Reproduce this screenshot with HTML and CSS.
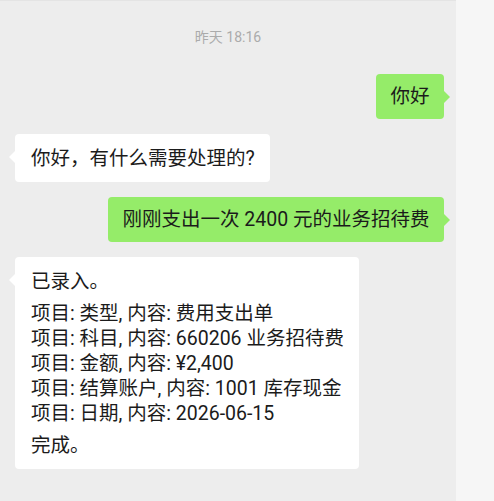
FILE: index.html
```html
<!DOCTYPE html>
<html lang="zh-CN">
<head>
<meta charset="utf-8">
<title>聊天</title>
<link rel="stylesheet" href="styles.css">
</head>
<body>
<div class="window">
  <main class="chat">
    <div class="time">昨天 18:16</div>
    <div class="row row-right">
      <div class="bubble bubble-me">你好</div>
    </div>
    <div class="row row-left">
      <div class="bubble bubble-other">你好，有什么需要处理的?</div>
    </div>
    <div class="row row-right">
      <div class="bubble bubble-me">刚刚支出一次 2400 元的业务招待费</div>
    </div>
    <div class="row row-left">
      <div class="bubble bubble-other">
        <p class="para">已录入。</p>
        <p class="para">项目: 类型, 内容: 费用支出单<br>项目: 科目, 内容: 660206 业务招待费<br>项目: 金额, 内容: ¥2,400<br>项目: 结算账户, 内容: 1001 库存现金<br>项目: 日期, 内容: 2026-06-15</p>
        <p class="para">完成。</p>
      </div>
    </div>
  </main>
  <aside class="side"></aside>
</div>
</body>
</html>
```

FILE: styles.css
```css
html, body {
  margin: 0;
  padding: 0;
}
body {
  width: 494px;
  height: 501px;
  overflow: hidden;
  font-family: Roboto, "Noto Sans CJK SC", sans-serif;
  color: #1b1b1b;
}
.window {
  display: flex;
  height: 501px;
}
.chat {
  width: 456px;
  flex: none;
  background: #ededed;
  border-top: 1px solid #e4e4e4;
  box-sizing: border-box;
  padding: 26px 12px 0 15px;
  display: flex;
  flex-direction: column;
  gap: 15px;
}
.side {
  flex: 1;
  background: #f6f6f6;
}
.time {
  text-align: center;
  font-size: 14px;
  line-height: 20px;
  color: #ababab;
  margin-right: -12px;
  margin-left: -15px;
  margin-bottom: 12px;
}
.row {
  display: flex;
}
.row-right {
  justify-content: flex-end;
}
.row-left {
  justify-content: flex-start;
}
.bubble {
  position: relative;
  font-size: 19.5px;
  line-height: 25px;
  border-radius: 4px;
  white-space: nowrap;
}
.bubble::after {
  content: "";
  position: absolute;
  top: 17px;
  width: 0;
  height: 0;
  border-top: 6px solid transparent;
  border-bottom: 6px solid transparent;
}
.bubble-me {
  background: #95ec69;
  padding: 10px 14.5px;
}
.bubble-me::after {
  right: -6px;
  border-left: 6px solid #95ec69;
}
.bubble-other {
  background: #ffffff;
  padding: 12px 15px 11px 16px;
}
.bubble-other::after {
  left: -6px;
  border-right: 6px solid #ffffff;
}
.para {
  margin: 0;
}
.para + .para {
  margin-top: 7px;
}
```
